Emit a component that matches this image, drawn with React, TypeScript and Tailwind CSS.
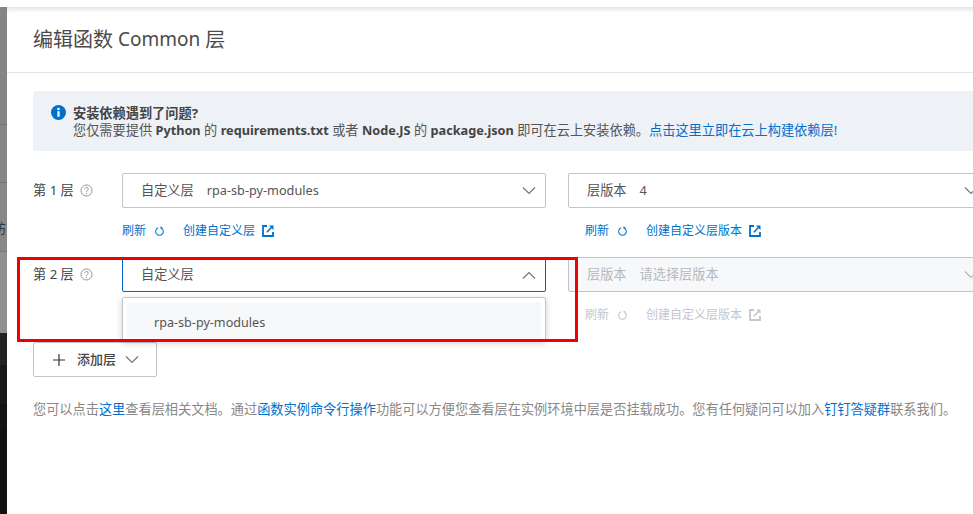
const font = "font-['Noto_Sans','Noto_Sans_CJK_SC',sans-serif]";

function Chevron({ up, disabled }: { up?: boolean; disabled?: boolean }) {
  return (
    <svg width="14" height="8" viewBox="0 0 14 8" fill="none" className={disabled ? "text-[#b5b8be]" : "text-[#73777a]"}>
      <path d={up ? "M1 7.5 7 1.5l6 6" : "M1 .5l6 6 6-6"} stroke="currentColor" strokeWidth="1.2" />
    </svg>
  );
}

function RefreshIcon({ disabled }: { disabled?: boolean }) {
  return (
    <svg width="11" height="11" viewBox="0 0 12 12" fill="none" className={disabled ? "text-[#c4c6cc]" : "text-[#0070cc]"}>
      <path d="M8.2 2.4A4.2 4.2 0 1 1 4.6 2" stroke="currentColor" strokeWidth="1.1" />
      <path d="M6.6 .6 9.2 1.4 7.8 3.8z" fill="currentColor" />
    </svg>
  );
}

function ExternalIcon({ disabled }: { disabled?: boolean }) {
  return (
    <svg width="12" height="12" viewBox="0 0 12 12" fill="none" className={disabled ? "text-[#c4c6cc]" : "text-[#0070cc]"}>
      <path d="M5 1H1v10h10V7" stroke="currentColor" strokeWidth="1.8" />
      <path d="M4.8 7.2 10 2" stroke="currentColor" strokeWidth="1.6" />
      <path d="M7 .5h4.5V5z" fill="currentColor" />
    </svg>
  );
}

function HelpIcon() {
  return (
    <svg width="13" height="13" viewBox="0 0 13 13" fill="none" className="text-[#8f9296]">
      <circle cx="6.5" cy="6.5" r="5.5" stroke="currentColor" />
      <path d="M4.8 5.2a1.7 1.7 0 1 1 2.6 1.4c-.6.4-.9.7-.9 1.4" stroke="currentColor" />
      <circle cx="6.5" cy="9.6" r=".7" fill="currentColor" />
    </svg>
  );
}

function LinkRow({ disabled, create, indent }: { disabled?: boolean; create: string; indent?: boolean }) {
  const color = disabled ? "text-[#c4c6cc]" : "text-[#0070cc]";
  return (
    <div className={`mt-[14px] flex h-[18px] items-center text-[12px] ${color} ${indent ? "pl-[17px]" : ""}`}>
      <span className="w-[24px] whitespace-nowrap">刷新</span>
      <span className="ml-[8px]">
        <RefreshIcon disabled={disabled} />
      </span>
      <span className="ml-[18px] whitespace-nowrap">{create}</span>
      <span className="ml-[7px]">
        <ExternalIcon disabled={disabled} />
      </span>
    </div>
  );
}

function Select({ label, value, up, disabled, active, latin }: { label: string; value?: string; up?: boolean; disabled?: boolean; active?: boolean; latin?: boolean }) {
  const border = active ? "border-[#0064c8]" : "border-[#c0c4cc]";
  const bg = disabled ? "bg-[#f7f8fa] text-[#b5b8be]" : "bg-white text-[#555]";
  return (
    <div className={`flex h-[35px] items-center justify-between rounded-[2px] border pl-[18px] pr-[9px] text-[13.2px] ${border} ${bg}`}>
      <div className="flex items-center gap-[13px] whitespace-nowrap pt-[1px]">
        <span>{label}</span>
        {value && <span className={latin ? "text-[12.7px]" : ""}>{value}</span>}
      </div>
      <Chevron up={up} disabled={disabled} />
    </div>
  );
}

function LayerLabel({ n }: { n: number }) {
  return (
    <div className="flex h-[35px] w-[89px] shrink-0 items-center gap-[6px] text-[13.2px] text-[#444]">
      <span className="whitespace-nowrap">第 {n} 层</span>
      <HelpIcon />
    </div>
  );
}

export default function App() {
  return (
    <div className={`relative h-[514px] w-[973px] overflow-hidden bg-white ${font}`}>
      <div className="relative z-10 h-[7px] bg-white" />
      <div className="flex h-[507px]">
        <div className="flex w-[7px] shrink-0 flex-col overflow-hidden">
          <div className="h-[118px] border-b border-[#737373] bg-[#858585]" />
          <div className="h-[58px] border-b border-[#737373] bg-[#868686]" />
          <div className="h-[69px] overflow-hidden border-b border-[#777] bg-[#888888] pt-[36px]">
            <div className="-ml-[7px] w-[20px] text-[13px] leading-[18px] text-[#2a3a4a]">防</div>
          </div>
          <div className="h-[81px] bg-[#8f8f8f]" />
          <div className="h-[32px] bg-[#222222]" />
          <div className="h-[39px] bg-[#181818]" />
          <div className="h-[25px] bg-[#131313]" />
          <div className="flex-1 bg-[#111111]" />
        </div>
        <div className="min-w-0 flex-1 overflow-hidden bg-white shadow-[inset_0_6px_6px_-5px_rgba(0,0,0,0.18)]">
          <div className="flex h-[66px] items-center border-b border-[#e3e5e8] pl-[26px] text-[20px] leading-none text-[#4a4a4a]">
            编辑函数 <span className="mx-[5px] text-[19px]">Common</span> 层
          </div>
          <div className="pl-[26px]">
            <div className="mt-[18px] flex h-[60px] w-[960px] gap-[5px] rounded-[2px] bg-[#eef1f6] pl-[18px] pt-[14px] text-[13.2px] leading-[17px] text-[#555]">
              <svg width="15" height="15" viewBox="0 0 15 15" className="shrink-0">
                <circle cx="7.5" cy="7.5" r="7.5" fill="#0070cc" />
                <rect x="6.4" y="6.2" width="2.2" height="5.6" fill="#fff" />
                <circle cx="7.5" cy="4" r="1.3" fill="#fff" />
              </svg>
              <div className="ml-[2px] whitespace-nowrap">
                <div className="font-bold text-[#444]">安装依赖遇到了问题?</div>
                <div>
                  您仅需要提供 <b className="text-[12.7px] text-[#444]">Python</b> 的 <b className="text-[12.7px] text-[#444]">requirements.txt</b> 或者{" "}
                  <b className="text-[12.7px] text-[#444]">Node.JS</b> 的 <b className="text-[12.7px] text-[#444]">package.json</b> 即可在云上安装依赖。
                  <span className="text-[#0070cc]">点击这里立即在云上构建依赖层!</span>
                </div>
              </div>
            </div>

            <div className="mt-[22px] flex">
              <LayerLabel n={1} />
              <div className="w-[424px] shrink-0">
                <Select label="自定义层" value="rpa-sb-py-modules" latin />
                <LinkRow create="创建自定义层" />
              </div>
              <div className="ml-[22px] w-[420px] shrink-0">
                <Select label="层版本" value="4" latin />
                <LinkRow create="创建自定义层版本" indent />
              </div>
            </div>

            <div className="mt-[17px] flex">
              <LayerLabel n={2} />
              <div className="relative w-[424px] shrink-0">
                <Select label="自定义层" up active />
                <div className="absolute left-0 right-0 top-[40px] z-10 h-[44px] rounded-[2px] border border-[#c0c4cc] bg-white px-[4px] pt-[4px] shadow-[0_2px_6px_rgba(0,0,0,0.2)]">
                  <div className="flex h-[36px] items-center rounded-[1px] bg-[#f7f8fa] pl-[27px] pt-[6px] text-[12.6px] text-[#555]">
                    rpa-sb-py-modules
                  </div>
                </div>
              </div>
              <div className="ml-[22px] w-[420px] shrink-0">
                <Select label="层版本" value="请选择层版本" disabled />
                <LinkRow create="创建自定义层版本" disabled indent />
              </div>
            </div>

            <button className="mt-[18px] flex h-[35px] w-[124px] items-center rounded-[2px] border border-[#c0c4cc] bg-white pl-[19px] text-[13px] font-medium text-[#444]">
              <svg width="12" height="12" viewBox="0 0 12 12" fill="none">
                <path d="M6 0v12M0 6h12" stroke="#333" strokeWidth="1.2" />
              </svg>
              <span className="ml-[12px]">添加层</span>
              <span className="ml-[9px]">
                <Chevron />
              </span>
            </button>

            <p className="mt-[23px] whitespace-nowrap text-[13.2px] leading-[19px] text-[#888]">
              您可以点击<span className="text-[#0070cc]">这里</span>查看层相关文档。通过
              <span className="text-[#0070cc]">函数实例命令行操作</span>
              功能可以方便您查看层在实例环境中层是否挂载成功。您有任何疑问可以加入
              <span className="text-[#0070cc]">钉钉答疑群</span>联系我们。
            </p>
          </div>
        </div>
      </div>
      {/* annotation drawn over the screenshot */}
      <div className="absolute left-[17px] top-[257px] z-20 h-[85px] w-[561px] border-[3px] border-[#f00000]" />
    </div>
  );
}
